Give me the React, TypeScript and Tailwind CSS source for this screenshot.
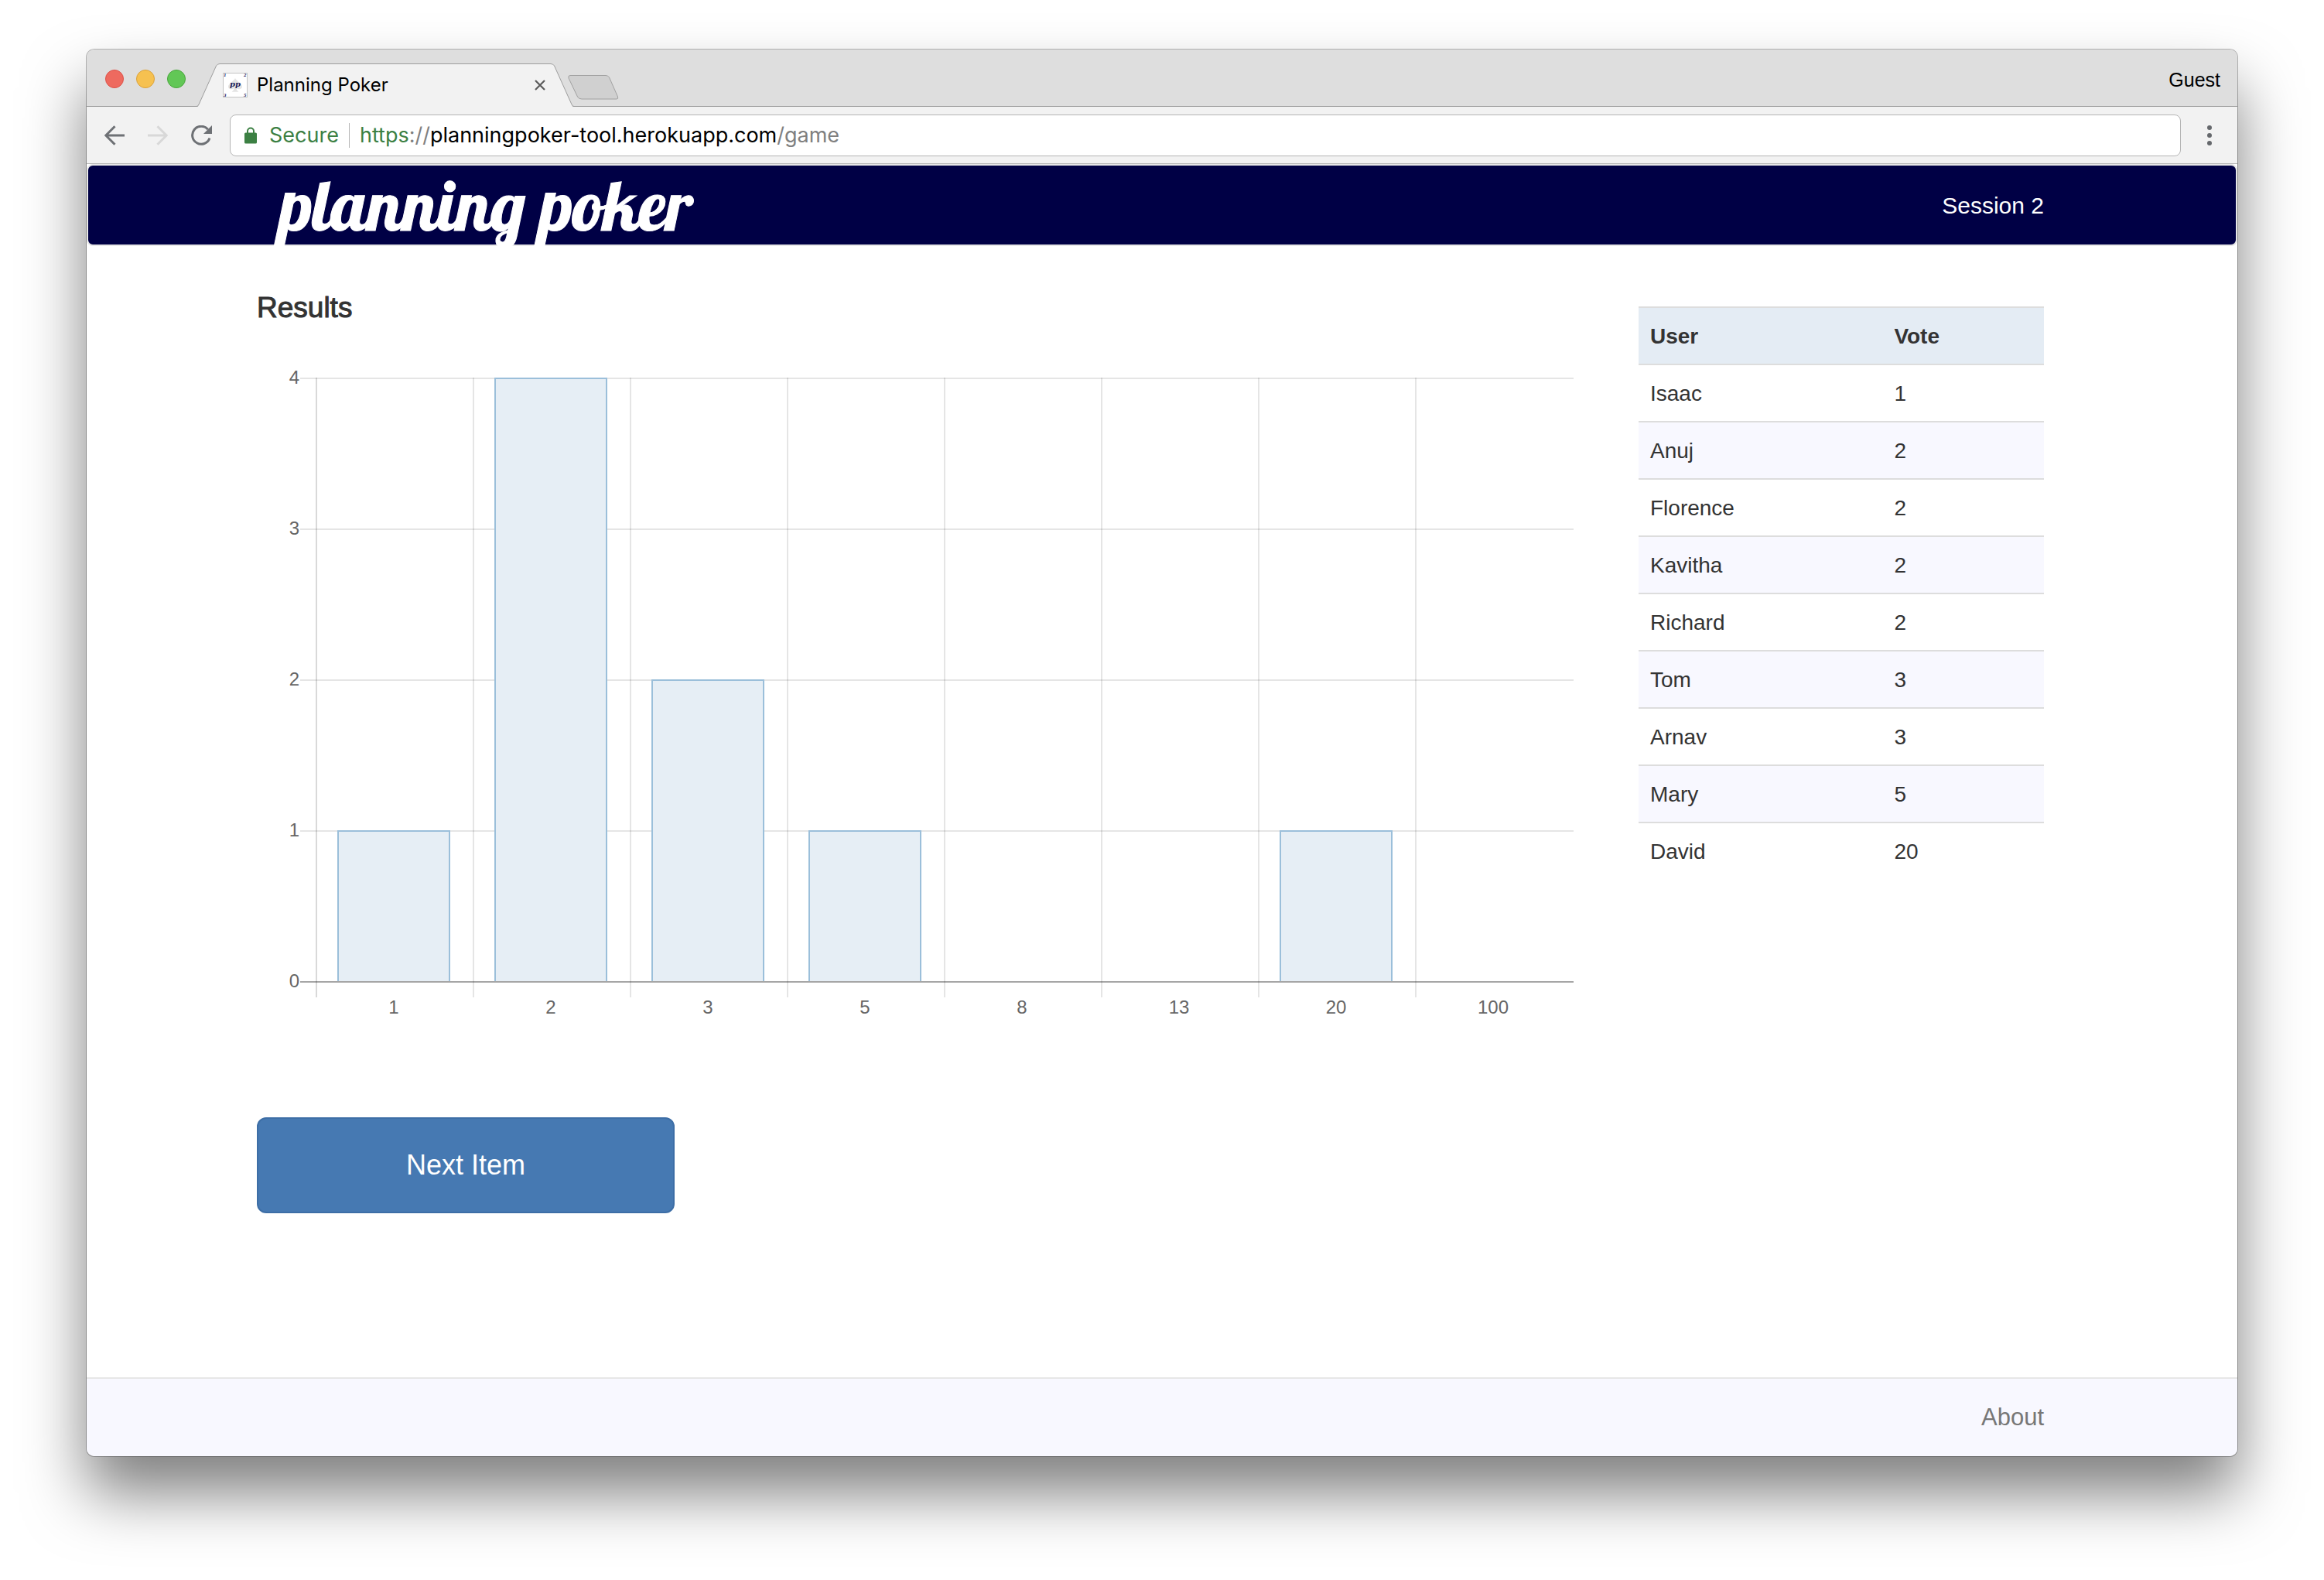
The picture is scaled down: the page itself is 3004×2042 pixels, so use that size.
import React from "react";

const votes = [
  { user: "Isaac", vote: 1 },
  { user: "Anuj", vote: 2 },
  { user: "Florence", vote: 2 },
  { user: "Kavitha", vote: 2 },
  { user: "Richard", vote: 2 },
  { user: "Tom", vote: 3 },
  { user: "Arnav", vote: 3 },
  { user: "Mary", vote: 5 },
  { user: "David", vote: 20 },
];

const cards = [1, 2, 3, 5, 8, 13, 20, 100];

function WindowButtons() {
  return (
    <div className="mb-[23px] flex gap-4">
      <button aria-label="Close window" className="size-6 rounded-full border border-[#dd5148] bg-[#ee6a5f]" />
      <button aria-label="Minimise window" className="size-6 rounded-full border border-[#dba13a] bg-[#f6c150]" />
      <button aria-label="Zoom window" className="size-6 rounded-full border border-[#4aa63d] bg-[#62c756]" />
    </div>
  );
}

function Favicon() {
  return (
    <svg viewBox="0 0 32 32" className="size-8 shrink-0" aria-hidden="true">
      <rect x="0.5" y="0.5" width="31" height="31" fill="#fff" stroke="#c4c4c4" />
      <path
        d="M16 7c2 4 9 7 9 11 0 3.500-5 4.500-7.500 1.800 0 2 1 3.500 3 5h-9c2-1.500 3-3 3-5C12 22.500 7 21.500 7 18c0-4 7-7 9-11z"
        fill="#e4e4e4"
      />
      <g fill="#1d1c5a" fontFamily="DejaVu Serif" fontStyle="italic" fontWeight="700">
        <text x="16" y="18" fontSize="10" textAnchor="middle">pp</text>
        <text x="1" y="5" fontSize="5">1</text>
        <text x="27" y="5" fontSize="5">2</text>
        <text x="1" y="31" fontSize="5">3</text>
        <text x="27" y="31" fontSize="5">5</text>
      </g>
    </svg>
  );
}

function TabStrip() {
  return (
    <div className="flex h-[74px] items-end border-b border-[#9c9c9c] bg-[#dedede] pl-6">
      <WindowButtons />
      <div className="relative -mb-px ml-[14px] flex h-14 w-[488px] items-center gap-3 pr-[37px] pl-[34px]">
        <svg viewBox="0 0 488 56" className="absolute inset-0 size-full" aria-hidden="true">
          <path d="M0 56 L2 55.500 L25.500 3 Q27 0 30 0 H458 Q461 0 462.500 3 L486 55.500 L488 56 Z" fill="#f2f2f2" />
          <path
            d="M0 55.500 Q2 55.500 3 53 L25.500 3 Q27 0.500 30 0.500 H458 Q461 0.500 462.500 3 L485 53 Q486 55.500 488 55.500"
            fill="none"
            stroke="#9c9c9c"
          />
        </svg>
        <div className="relative"><Favicon /></div>
        <span className="relative flex-1 text-2xl text-black">Planning Poker</span>
        <button aria-label="Close tab" className="relative">
          <svg viewBox="0 0 14 14" className="size-[14px]" fill="none" stroke="#5a5a5a" strokeWidth="2.200">
            <path d="M1 1l12 12M13 1L1 13" />
          </svg>
        </button>
      </div>
      <button aria-label="New tab" className="mb-[8px] -ml-2">
        <svg viewBox="0 0 66 32" className="h-8 w-[66px]">
          <path
            d="M3 0.500 H49 Q52 0.500 53.500 3 L64.500 28 Q65.500 31 63 31 H18 Q14 31 12.500 28 L1 4 Q0 0.500 3 0.500Z"
            fill="#d0d0d0"
            stroke="#a0a0a0"
          />
        </svg>
      </button>
      <button className="mr-[22px] mb-[18px] ml-auto font-['Liberation_Sans'] text-[25px] leading-8 text-black">Guest</button>
    </div>
  );
}

function Toolbar() {
  return (
    <div className="flex h-[74px] items-center border-b border-[#b4b4b4] bg-[#f2f2f2] pr-[33px] pl-[23px]">
      <div className="mr-[23px] flex items-center gap-[30px]">
        <button aria-label="Back">
          <svg viewBox="0 0 26 26" className="size-[26px]" fill="none" stroke="#6e7175" strokeWidth="3">
            <path d="M26 13H2M13.500 1.200L1.800 13l11.700 11.800" />
          </svg>
        </button>
        <button aria-label="Forward" disabled>
          <svg viewBox="0 0 26 26" className="size-[26px]" fill="none" stroke="#d8d8d8" strokeWidth="3">
            <path d="M0 13h24M12.500 1.200L24.200 13 12.500 24.800" />
          </svg>
        </button>
        <button aria-label="Reload">
          <svg viewBox="0 0 27 26" className="h-[26px] w-[27px]">
            <path d="M21.800 5.200A11.500 11.500 0 1 0 24 16.500" fill="none" stroke="#6e7175" strokeWidth="3" />
            <path d="M27 0v11H16z" fill="#6e7175" />
          </svg>
        </button>
      </div>
      <div className="flex h-[54px] flex-1 items-center rounded-lg border border-[#b4b4b4] bg-white pl-[18px] text-[27px] leading-10">
        <svg viewBox="0 0 16 22" className="mr-4 h-[22px] w-4" aria-hidden="true">
          <rect y="7.500" width="16" height="14" rx="1.500" fill="#3c8043" />
          <path d="M4 9V5.500a4 4 0 0 1 8 0V9" fill="none" stroke="#3c8043" strokeWidth="2" />
        </svg>
        <span className="text-[#3c8043]">Secure</span>
        <span className="mx-[13px] h-8 w-px bg-[#b4b4b4]" />
        <div
          role="textbox"
          aria-label="Address"
          contentEditable
          suppressContentEditableWarning
          spellCheck={false}
          className="flex-1 text-[#808080] outline-none"
        >
          <span className="text-[#3c8043]">https</span>://<span className="text-black">planningpoker-tool.herokuapp.com</span>/game
        </div>
      </div>
      <button aria-label="Menu" className="ml-[34px]">
        <svg viewBox="0 0 6 26" className="h-[26px] w-[6px]" fill="#65686c">
          <circle cx="3" cy="3" r="3" />
          <circle cx="3" cy="13" r="3" />
          <circle cx="3" cy="23" r="3" />
        </svg>
      </button>
    </div>
  );
}

function ResultsChart() {
  const left = 77;
  const right = 1702;
  const top = 23;
  const unit = 195;
  const base = top + unit * 4;
  const step = 203;
  return (
    <svg viewBox="0 0 1702 854" className="mt-12 w-full" role="img" aria-label="Votes per card" fontSize="24" fill="#666">
      {[4, 3, 2, 1, 0].map((n) => (
        <g key={n}>
          <line
            x1="56"
            x2={right}
            y1={base - n * unit}
            y2={base - n * unit}
            stroke={n === 0 ? "#a6a6a6" : "#e5e5e5"}
            strokeWidth="2"
          />
          <text x="55" y={base - n * unit + 7} textAnchor="end">{n}</text>
        </g>
      ))}
      {cards.map((card, i) => {
        const x = left + i * step;
        const count = votes.filter((v) => v.vote === card).length;
        const barTop = base - count * unit;
        return (
          <g key={card}>
            <line x1={x} x2={x} y1={top - 1} y2={base + 20} stroke="#000" strokeOpacity={i === 0 ? 0.15 : 0.1} strokeWidth="2" />
            <text x={x + 100} y={base + 41} textAnchor="middle">{card}</text>
            {count > 0 && (
              <>
                <rect x={x + 28} y={barTop} width="144" height={base - barTop - 1} fill="#e6eef5" />
                <path d={`M${x + 28} ${base - 1}V${barTop}h144V${base - 1}`} fill="none" stroke="#9bbfda" strokeWidth="2" />
              </>
            )}
          </g>
        );
      })}
    </svg>
  );
}

function VoteTable() {
  return (
    <table className="mt-5 w-[524px] shrink-0 table-fixed border-separate border-spacing-0 self-start text-left text-[28px] leading-10 text-[#333]">
      <thead>
        <tr className="bg-[#e4ecf4]">
          <th className="w-3/5 border-t-2 border-[#ddd] px-[15px] pt-[17px] pb-[15px] font-bold">User</th>
          <th className="border-t-2 border-[#ddd] px-4 pt-[17px] pb-[15px] font-bold">Vote</th>
        </tr>
      </thead>
      <tbody>
        {votes.map((v) => (
          <tr key={v.user} className="even:bg-[#f8f8ff]">
            <td className="border-t-2 border-[#ddd] px-[15px] pt-[17px] pb-[15px]">{v.user}</td>
            <td className="border-t-2 border-[#ddd] px-4 pt-[17px] pb-[15px]">{v.vote}</td>
          </tr>
        ))}
      </tbody>
    </table>
  );
}

export default function App() {
  return (
    <div className="flex min-h-screen flex-col bg-white px-28 pt-16 pb-40">
      <div className="flex flex-1 flex-col rounded-[10px] bg-white font-['Inter',sans-serif] shadow-[0_0_0_1px_rgba(0,0,0,0.28),0_48px_80px_rgba(0,0,0,0.5)]">
        <div className="overflow-hidden rounded-t-[10px]">
          <TabStrip />
          <Toolbar />
        </div>
        <div className="flex flex-1 flex-col font-['Liberation_Sans',Arial,sans-serif]">
          <nav className="h-[106px] rounded-lg border-2 border-[#e7e7e7] bg-[#000045]">
            <div className="mx-auto flex h-full max-w-[2340px] items-center justify-between pr-[30px] pl-[30px]">
              <a
                href="#home"
                className="font-['Lobster','Liberation_Serif',serif] text-[90px] leading-[102px] text-white [-webkit-text-stroke:1px_white]"
              >
                planning poker
              </a>
              <span className="text-[30px] text-white">Session 2</span>
            </div>
          </nav>
          <main className="mx-auto flex w-full max-w-[2340px] flex-1 gap-[84px] pt-[58px] pr-[30px]">
            <section className="flex-1">
              <h1 className="pt-0.5 text-[37px] leading-10 text-[#333] [-webkit-text-stroke:1px_#333]">Results</h1>
              <ResultsChart />
              <button className="mt-[124px] h-[124px] w-[540px] rounded-xl border-2 border-[#3d6ea6] bg-[#4679b2] text-4xl text-white">
                Next Item
              </button>
            </section>
            <VoteTable />
          </main>
          <footer className="h-[102px] rounded-b-[10px] border-t-2 border-[#e7e7e7] bg-[#f8f8ff]">
            <div className="mx-auto flex h-full max-w-[2340px] items-center justify-end pr-[30px]">
              <a href="#about" className="text-[31px] text-[#777]">About</a>
            </div>
          </footer>
        </div>
      </div>
    </div>
  );
}
